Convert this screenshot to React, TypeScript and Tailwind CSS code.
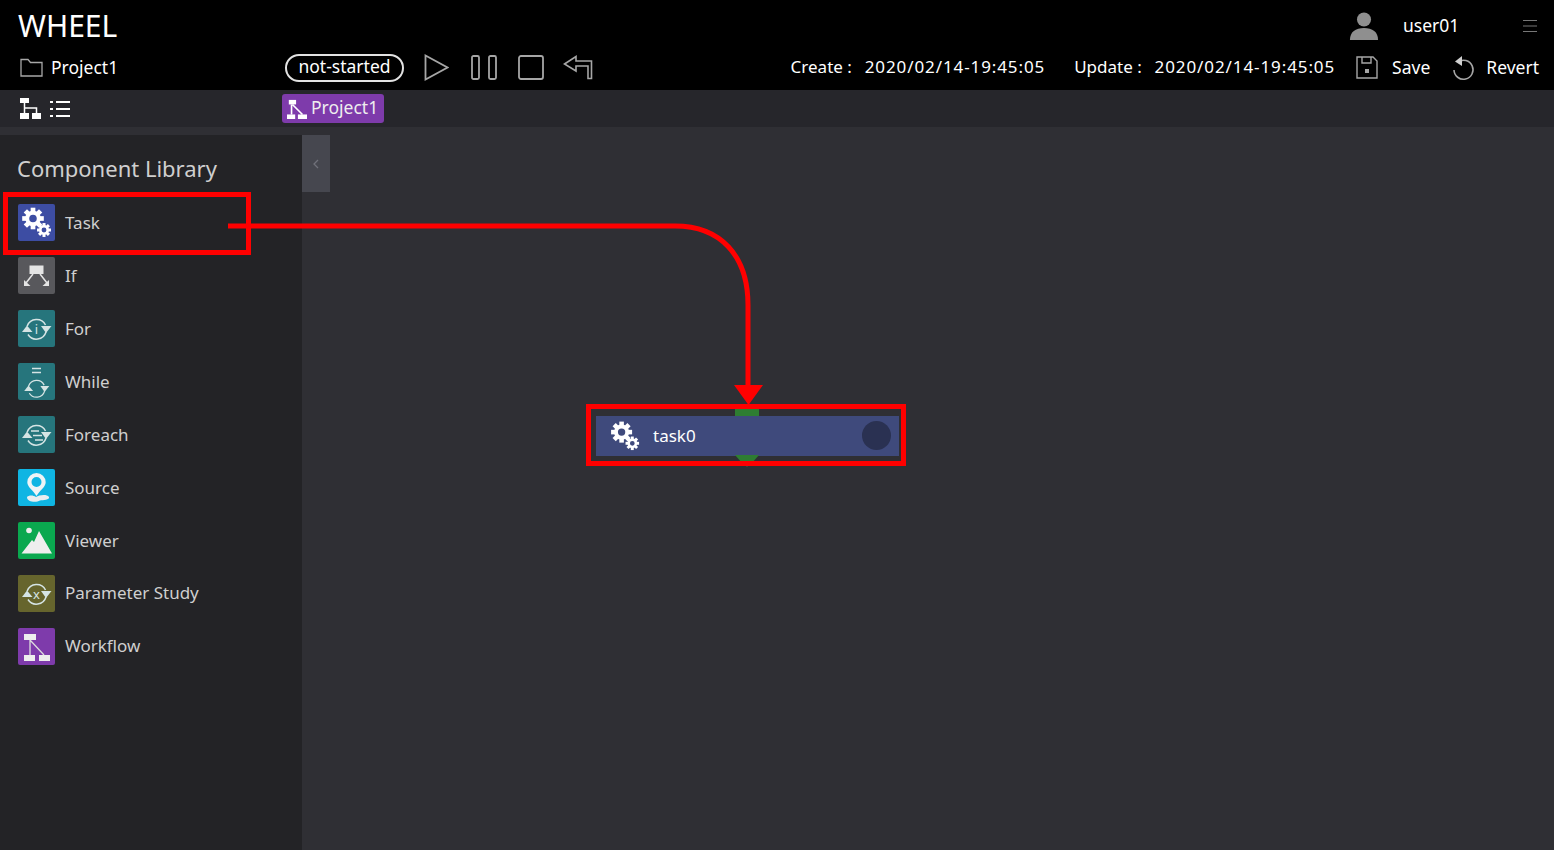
import React from 'react';

const FONT = '"Noto Sans", "Open Sans", "Liberation Sans", sans-serif';

function Gear({ cx, cy, r }: { cx: number; cy: number; r: number }): React.ReactNode {
  const teeth = Array.from({ length: 8 }, (_, i) => i * 45);
  return (
    <g>
      {teeth.map((a) => (
        <rect
          key={a}
          x={cx - r * 0.26}
          y={cy - r * 1.2}
          width={r * 0.52}
          height={r * 0.6}
          fill="#fff"
          transform={`rotate(${a} ${cx} ${cy})`}
        />
      ))}
      <circle cx={cx} cy={cy} r={r * 0.64} fill="none" stroke="#fff" strokeWidth={r * 0.44} />
    </g>
  );
}

function GearsIcon({ className }: { className?: string }): React.ReactNode {
  return (
    <svg viewBox="0 0 37 37" className={className}>
      <Gear cx={15} cy={14.5} r={9} />
      <Gear cx={26} cy={26} r={5.8} />
    </svg>
  );
}

function LoopArrows(): React.ReactNode {
  return (
    <g fill="none" stroke="#d5e4e4" strokeWidth="1.5">
      <path d="M9.2 16 A10 10 0 0 1 27.5 15" />
      <path d="M28 22 A10 10 0 0 1 10 24.5" />
      <path d="M4 22 L14.5 22 L9 15.5 Z" fill="#d5e4e4" stroke="none" />
      <path d="M23 16 L33.5 16 L28 23 Z" fill="#d5e4e4" stroke="none" />
    </g>
  );
}

function LibIcon({ kind }: { kind: string }): React.ReactNode {
  if (kind === 'task') return <GearsIcon className="h-full w-full" />;
  if (kind === 'if') {
    return (
      <svg viewBox="0 0 37 37" className="h-full w-full">
        <rect x="11.5" y="8.5" width="14" height="8.5" fill="#e4e4e4" />
        <path d="M15 17 L8 26 M22 17 L29 26" stroke="#e4e4e4" strokeWidth="1.5" />
        <path d="M6 23 L6 29 L12.5 29 Z M31 23 L31 29 L24.5 29 Z" fill="#e4e4e4" />
      </svg>
    );
  }
  if (kind === 'for') {
    return (
      <svg viewBox="0 0 37 37" className="h-full w-full">
        <LoopArrows />
        <text x="18.5" y="24" textAnchor="middle" fontSize="13" fill="#d5e4e4" fontFamily={FONT}>i</text>
      </svg>
    );
  }
  if (kind === 'while') {
    return (
      <svg viewBox="0 0 37 37" className="h-full w-full">
        <path d="M14 5.5 H23 M14 9.5 H23" stroke="#d5e4e4" strokeWidth="1.5" />
        <g transform="translate(2.8 9.4) scale(0.85)">
          <LoopArrows />
        </g>
      </svg>
    );
  }
  if (kind === 'foreach') {
    return (
      <svg viewBox="0 0 37 37" className="h-full w-full">
        <LoopArrows />
        <path d="M13 15 H21 M15 19.5 H24 M17 24 H25" stroke="#d5e4e4" strokeWidth="1.5" />
      </svg>
    );
  }
  if (kind === 'source') {
    return (
      <svg viewBox="0 0 37 37" className="h-full w-full">
        <path
          fillRule="evenodd"
          d="M18.5 4 A9.2 9.2 0 0 1 27.7 13.2 C27.7 18 22 21 18.5 27 C15 21 9.3 18 9.3 13.2 A9.2 9.2 0 0 1 18.5 4 Z M18.5 8 A5 5 0 1 0 18.5 18 A5 5 0 1 0 18.5 8 Z"
          fill="#eef4f6"
        />
        <path d="M9 28 C11 26 15 26 18 28 C21 26 29 25 31 28 C32 31 25 31 22 31.5 C18 34 9 33 9 28 Z" fill="#e8eef0" />
      </svg>
    );
  }
  if (kind === 'viewer') {
    return (
      <svg viewBox="0 0 37 37" className="h-full w-full">
        <circle cx="11" cy="8.5" r="2.8" fill="#eee" />
        <path d="M3.5 31.5 L14 18 L16 20 L21 9 L34 31.5 Z" fill="#eee" />
      </svg>
    );
  }
  if (kind === 'ps') {
    return (
      <svg viewBox="0 0 37 37" className="h-full w-full">
        <LoopArrows />
        <text x="18.5" y="24" textAnchor="middle" fontSize="13" fill="#d5e4e4" fontFamily={FONT}>x</text>
      </svg>
    );
  }
  return (
    <svg viewBox="0 0 37 37" className="h-full w-full">
      <rect x="6" y="6" width="12" height="6" fill="#eee" />
      <rect x="6" y="27" width="11" height="6" fill="#eee" />
      <rect x="21" y="27" width="11" height="6" fill="#eee" />
      <path d="M12 12 V27 M12 12 L26 27" stroke="#ddd" strokeWidth="1.3" />
    </svg>
  );
}

const ITEMS = [
  { kind: 'task', label: 'Task', color: 'bg-[#3d4da3]' },
  { kind: 'if', label: 'If', color: 'bg-[#58585c]' },
  { kind: 'for', label: 'For', color: 'bg-[#26757c]' },
  { kind: 'while', label: 'While', color: 'bg-[#26757c]' },
  { kind: 'foreach', label: 'Foreach', color: 'bg-[#26757c]' },
  { kind: 'source', label: 'Source', color: 'bg-[#0fb5e3]' },
  { kind: 'viewer', label: 'Viewer', color: 'bg-[#0aa84f]' },
  { kind: 'ps', label: 'Parameter Study', color: 'bg-[#66652d]' },
  { kind: 'workflow', label: 'Workflow', color: 'bg-[#7e3bab]' },
];

function Stamp(): React.ReactNode {
  return (
    <svg viewBox="0 0 22 22" className="h-[20px] w-[20px]">
      <rect x="2" y="1" width="8" height="5" fill="#fff" />
      <rect x="0" y="17" width="9" height="5" fill="#fff" />
      <rect x="12" y="17" width="10" height="5" fill="#fff" />
      <path d="M5 6 V17 M6 6 L17 17" stroke="#fff" strokeWidth="1.8" fill="none" />
    </svg>
  );
}

export default function App(): React.ReactNode {
  return (
    <div className="relative flex h-[850px] w-[1554px] flex-col overflow-hidden bg-[#2f2f34]" style={{ fontFamily: FONT }}>
      {/* Header */}
      <header className="h-[90px] shrink-0 bg-black text-white">
        <div className="flex h-[45px] items-center pl-[18px] pr-[17px] pt-[7px]">
          <span className="text-[30px] leading-none">WHEEL</span>
          <svg viewBox="0 0 32 32" className="ml-auto h-[30px] w-[30px]">
            <circle cx="16" cy="9" r="7.5" fill="#8f8f8f" />
            <path d="M1 31 C1 22 7 18 16 18 C25 18 31 22 31 31 Z" fill="#8f8f8f" />
          </svg>
          <span className="ml-[24px] w-[56px] text-[17.5px] leading-none">user01</span>
          <svg viewBox="0 0 14 14" className="ml-[64px] h-[14px] w-[14px]">
            <path d="M0 1.5 H14 M0 7 H14 M0 12.5 H14" stroke="#777" strokeWidth="1.2" />
          </svg>
        </div>
        <div className="flex h-[45px] items-center pl-[20px] pr-[15px]">
          <svg viewBox="0 0 23 19" className="h-[19px] w-[23px]">
            <path d="M1 18 V1.5 H8 L10.5 4.5 H22 V18 Z" fill="none" stroke="#a8a8a8" strokeWidth="1.3" />
          </svg>
          <span className="ml-[8px] w-[234px] text-[17.5px]">Project1</span>
          <span className="mt-[1px] flex h-[28px] w-[119px] items-center justify-center rounded-full border-2 border-[#e2e2e2] pb-[4px] text-[17.5px]">not-started</span>
          <svg viewBox="0 0 25 27" className="ml-[20px] h-[27px] w-[25px]">
            <path d="M1.5 1.5 L23.5 13.5 L1.5 25.5 Z" fill="none" stroke="#a6a6a6" strokeWidth="1.8" />
          </svg>
          <svg viewBox="0 0 26 25" className="ml-[22px] h-[25px] w-[26px]">
            <rect x="1" y="1" width="7" height="23" rx="1.5" fill="none" stroke="#a6a6a6" strokeWidth="1.8" />
            <rect x="18" y="1" width="7" height="23" rx="1.5" fill="none" stroke="#a6a6a6" strokeWidth="1.8" />
          </svg>
          <svg viewBox="0 0 26 25" className="ml-[21px] h-[25px] w-[26px]">
            <rect x="1" y="1" width="24" height="23" rx="2" fill="none" stroke="#a6a6a6" strokeWidth="1.8" />
          </svg>
          <svg viewBox="0 0 30 25" className="ml-[19px] h-[25px] w-[30px]">
            <path d="M1.5 9 L13 1.5 V6 H28.5 V23.5 H25 V11 H13 V16 Z" fill="none" stroke="#a6a6a6" strokeWidth="1.6" />
          </svg>
          <span className="ml-auto pb-[2px] text-[17px]">Create :&nbsp; <span className="ml-[4px] tracking-[0.9px]">2020/02/14-19:45:05</span></span>
          <span className="ml-[29px] pb-[2px] text-[17px]">Update :&nbsp; <span className="ml-[4px] tracking-[0.9px]">2020/02/14-19:45:05</span></span>
          <svg viewBox="0 0 22 23" className="ml-[21px] h-[23px] w-[22px]">
            <path d="M1 1 H17 L21 5 V22 H1 Z M6 1 V7 H15 V1" fill="none" stroke="#a6a6a6" strokeWidth="1.4" />
            <rect x="9" y="13" width="4" height="4" fill="#a6a6a6" />
          </svg>
          <span className="ml-[14px] pb-[1px] text-[17.5px]">Save</span>
          <svg viewBox="0 0 24 26" className="ml-[21px] h-[26px] w-[24px]">
            <path d="M7 7 A9.5 9.5 0 1 1 3 15" fill="none" stroke="#a6a6a6" strokeWidth="1.6" />
            <path d="M11 1 L11 11 L4 6.5 Z" fill="#d0d0d0" />
          </svg>
          <span className="ml-[11px] pb-[1px] text-[17.5px]">Revert</span>
        </div>
      </header>

      {/* Breadcrumb bar */}
      <div className="flex h-[37px] shrink-0 items-center bg-[#26262b] pl-[20px]">
        <svg viewBox="0 0 21 21" className="h-[21px] w-[21px]">
          <rect x="0" y="0" width="9" height="5" fill="#fff" />
          <rect x="0" y="15" width="9" height="6" fill="#fff" />
          <rect x="12" y="15" width="9" height="6" fill="#fff" />
          <path d="M4.5 5 V15 M4.5 10 H16.5 V15" stroke="#fff" strokeWidth="1.5" fill="none" />
        </svg>
        <svg viewBox="0 0 20 18" className="ml-[9px] h-[18px] w-[20px]">
          <path d="M0 2 H3 M6 2 H20 M0 9 H3 M6 9 H20 M0 16 H3 M6 16 H20" stroke="#fff" strokeWidth="2" />
        </svg>
        <div className="ml-[212px] flex h-[29px] w-[102px] items-center rounded-[3px] bg-[#7e3bab] pl-[5px] text-[17.5px] text-[#eee]">
          <Stamp />
          <span className="ml-[4px] pb-[2px]">Project1</span>
        </div>
      </div>

      {/* Body */}
      <div className="mt-[8px] flex min-h-0 flex-1">
        <aside className="w-[302px] shrink-0 bg-[#232326]">
          <h2 className="flex h-[61.5px] items-end pb-[17.5px] pl-[17px] text-[22px] leading-none text-[#cfcfcf]">Component Library</h2>
          {ITEMS.map((item) => (
            <div key={item.label} className="flex h-[52.9px] items-center pl-[18px]">
              <div className={`h-[37px] w-[37px] rounded-[2px] ${item.color}`}>
                <LibIcon kind={item.kind} />
              </div>
              <span className="ml-[10px] text-[17px] text-[#cfcfcf]">{item.label}</span>
            </div>
          ))}
        </aside>

        <main className="relative flex-1">
          <div className="flex h-[57px] w-[28px] items-center justify-center bg-[#46474f]">
            <svg viewBox="0 0 6 10" className="h-[10px] w-[6px]">
              <path d="M5 1 L1 5 L5 9" fill="none" stroke="#70717a" strokeWidth="1.3" />
            </svg>
          </div>

          {/* task node */}
          <div className="absolute left-[294px] top-[281px] flex h-[40px] w-[303px] items-center bg-[#3f4a7c] text-white">
            <div className="absolute left-[139px] top-[-7px] h-[7px] w-[24px] bg-[#2e7d32]" />
            <svg viewBox="0 0 24 12" className="absolute left-[139px] top-[39px] h-[12px] w-[24px]">
              <path d="M0 0 H24 L17 8 H7 Z" fill="#2e7d32" />
              <path d="M10 9 H14 L12 12 Z" fill="#4c6b4e" />
            </svg>
            <GearsIcon className="ml-[11px] h-[36px] w-[36px]" />
            <span className="ml-[10px] text-[17px]">task0</span>
            <div className="absolute right-[8px] top-[5px] h-[29px] w-[29px] rounded-full bg-[#2a3152]" />
          </div>
        </main>
      </div>

      {/* Red annotations */}
      <div className="absolute left-[3px] top-[192px] h-[63px] w-[248px] border-[5px] border-[#ff0000]" />
      <div className="absolute left-[586px] top-[404px] h-[62px] w-[320px] border-[5px] border-[#ff0000]" />
      <svg viewBox="0 0 1554 850" className="pointer-events-none absolute left-0 top-0 h-[850px] w-[1554px]">
        <path d="M228 226 H675 C720 226 748 255 748 305 V388" fill="none" stroke="#ff0000" strokeWidth="5" />
        <path d="M734 385 H763 L748.5 405 Z" fill="#ff0000" />
      </svg>
    </div>
  );
}
